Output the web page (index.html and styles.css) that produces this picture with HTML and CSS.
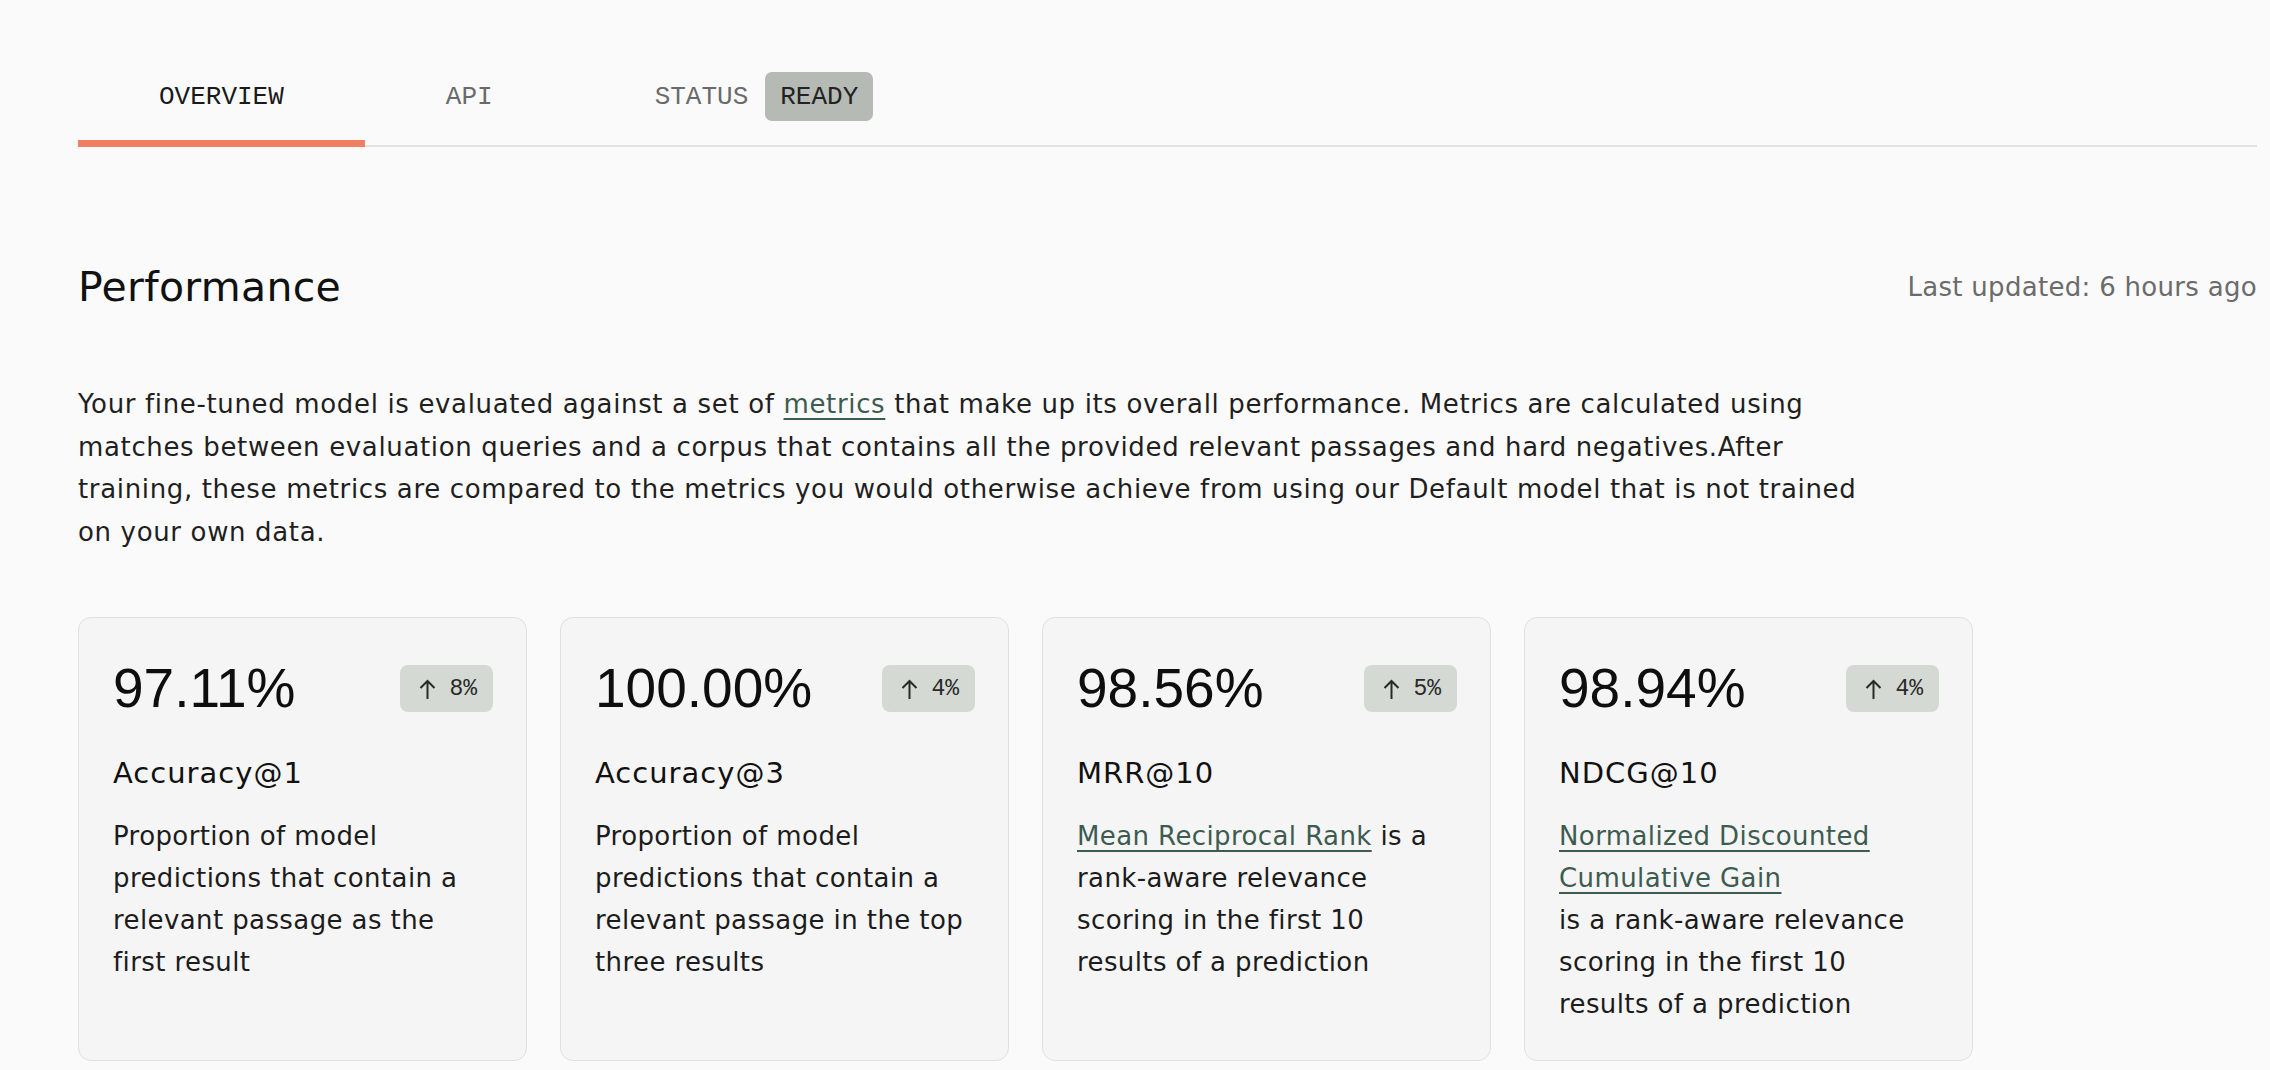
FILE: index.html
```html
<!DOCTYPE html>
<html lang="en">
<head>
<meta charset="utf-8">
<title>Performance</title>
<link rel="stylesheet" href="styles.css">
</head>
<body>
<main class="page">
  <nav class="tabs">
    <div class="tab active">OVERVIEW</div>
    <div class="tab">API</div>
    <div class="tab status">STATUS <span class="pill">READY</span></div>
  </nav>

  <section class="perf">
    <header class="perf-head">
      <h2 class="perf-title">Performance</h2>
      <span class="updated">Last updated: 6 hours ago</span>
    </header>

    <p class="intro">Your fine-tuned model is evaluated against a set of <a href="#">metrics</a> that make up its overall performance. Metrics are calculated using matches between evaluation queries and a corpus that contains all the provided relevant passages and hard negatives.After training, these metrics are compared to the metrics you would otherwise achieve from using our Default model that is not trained on your own data.</p>

    <div class="cards">
      <article class="card">
        <div class="card-top">
          <span class="value">97.11%</span>
          <span class="badge"><svg class="arrow" viewBox="0 0 17 20" width="17" height="20"><path d="M8.5 2V20M1.5 9L8.5 2L15.5 9"/></svg>8%</span>
        </div>
        <h3 class="metric">Accuracy@1</h3>
        <p class="desc">Proportion of model predictions that contain a relevant passage as the first result</p>
      </article>

      <article class="card">
        <div class="card-top">
          <span class="value">100.00%</span>
          <span class="badge"><svg class="arrow" viewBox="0 0 17 20" width="17" height="20"><path d="M8.5 2V20M1.5 9L8.5 2L15.5 9"/></svg>4%</span>
        </div>
        <h3 class="metric">Accuracy@3</h3>
        <p class="desc">Proportion of model predictions that contain a relevant passage in the top three results</p>
      </article>

      <article class="card">
        <div class="card-top">
          <span class="value">98.56%</span>
          <span class="badge"><svg class="arrow" viewBox="0 0 17 20" width="17" height="20"><path d="M8.5 2V20M1.5 9L8.5 2L15.5 9"/></svg>5%</span>
        </div>
        <h3 class="metric">MRR@10</h3>
        <p class="desc"><a href="#">Mean Reciprocal Rank</a> is a rank-aware relevance scoring in the first 10 results of a prediction</p>
      </article>

      <article class="card">
        <div class="card-top">
          <span class="value">98.94%</span>
          <span class="badge"><svg class="arrow" viewBox="0 0 17 20" width="17" height="20"><path d="M8.5 2V20M1.5 9L8.5 2L15.5 9"/></svg>4%</span>
        </div>
        <h3 class="metric">NDCG@10</h3>
        <p class="desc"><a href="#">Normalized Discounted Cumulative Gain</a><br>is a rank-aware relevance scoring in the first 10 results of a prediction</p>
      </article>
    </div>
  </section>
</main>
</body>
</html>
```

FILE: styles.css
```css
* { box-sizing: border-box; }

body {
  margin: 0;
  background: #fafafa;
  color: #1c1c1c;
  font-family: "DejaVu Sans", "Noto Sans", sans-serif;
}

.page {
  padding: 59px 13px 0 78px;
}

/* Tabs */
.tabs {
  display: flex;
  border-bottom: 2px solid #e2e2e2;
}

.tab {
  display: flex;
  align-items: center;
  gap: 17px;
  height: 88px;
  padding: 0 81px 6px;
  border-bottom: 7px solid transparent;
  margin-bottom: -2px;
  font-family: "Liberation Mono", monospace;
  font-size: 26px;
  line-height: 30px;
  color: #6a6a6a;
}

.tab.active {
  border-bottom-color: #ef8062;
  color: #1a1a1a;
}

.pill {
  background: #b5bab4;
  color: #222;
  padding: 9.5px 15px;
  border-radius: 7px;
}

/* Performance section */
.perf {
  margin-top: 116px;
}

.perf-head {
  display: flex;
  justify-content: space-between;
  align-items: center;
}

.perf-title {
  margin: 0;
  font-size: 41px;
  line-height: 48px;
  letter-spacing: 0.3px;
  font-weight: 400;
  color: #111;
}

.updated {
  font-size: 26px;
  line-height: 31px;
  letter-spacing: 0.3px;
  color: #6b6b6b;
}

.intro {
  margin: 72px 0 0;
  max-width: 1785px;
  font-size: 26px;
  line-height: 42.5px;
  letter-spacing: 0.65px;
  color: #1f1f1f;
}

.intro a,
.desc a {
  color: #3d5c50;
  text-decoration: underline;
  text-decoration-thickness: 2px;
  text-underline-offset: 5px;
}

/* Cards */
.cards {
  margin-top: 64px;
  display: grid;
  grid-template-columns: repeat(4, 449px);
  gap: 33px;
}

.card {
  background: #f5f5f5;
  border: 1px solid #e0e0e0;
  border-radius: 13px;
  padding: 43px 33px 35px 34px;
}

.card-top {
  display: flex;
  justify-content: space-between;
  align-items: center;
}

.value {
  font-family: "Liberation Sans", Arial, sans-serif;
  font-size: 55px;
  line-height: 55px;
  color: #0e0e0e;
}

.badge {
  display: flex;
  align-items: center;
  gap: 13px;
  height: 47px;
  padding: 0 16px 0 19px;
  background: #d5d9d3;
  border-radius: 8px;
  font-family: "Liberation Mono", monospace;
  font-size: 23px;
  color: #2a2a2a;
}

.arrow {
  fill: none;
  stroke: #2a2a2a;
  stroke-width: 2;
}

.metric {
  margin: 40px 0 0;
  font-size: 29px;
  line-height: 35px;
  font-weight: 400;
  letter-spacing: 1px;
  color: #111;
}

.desc {
  margin: 24px 0 0;
  max-width: 376px;
  font-size: 26px;
  line-height: 42px;
  letter-spacing: 0.4px;
  color: #1c1c1c;
}
```
